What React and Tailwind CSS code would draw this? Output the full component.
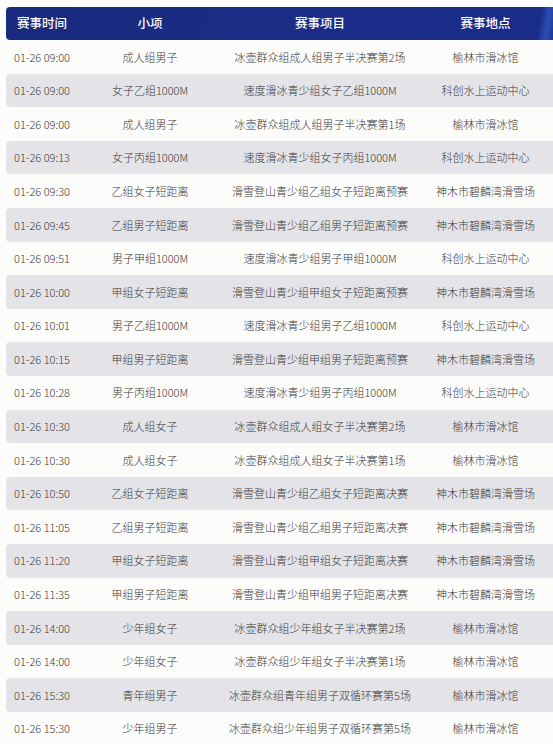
import React from "react";

const rows = [
  ["01-26 09:00", "成人组男子", "冰壶群众组成人组男子半决赛第2场", "榆林市滑冰馆"],
  ["01-26 09:00", "女子乙组1000M", "速度滑冰青少组女子乙组1000M", "科创水上运动中心"],
  ["01-26 09:00", "成人组男子", "冰壶群众组成人组男子半决赛第1场", "榆林市滑冰馆"],
  ["01-26 09:13", "女子丙组1000M", "速度滑冰青少组女子丙组1000M", "科创水上运动中心"],
  ["01-26 09:30", "乙组女子短距离", "滑雪登山青少组乙组女子短距离预赛", "神木市碧麟湾滑雪场"],
  ["01-26 09:45", "乙组男子短距离", "滑雪登山青少组乙组男子短距离预赛", "神木市碧麟湾滑雪场"],
  ["01-26 09:51", "男子甲组1000M", "速度滑冰青少组男子甲组1000M", "科创水上运动中心"],
  ["01-26 10:00", "甲组女子短距离", "滑雪登山青少组甲组女子短距离预赛", "神木市碧麟湾滑雪场"],
  ["01-26 10:01", "男子乙组1000M", "速度滑冰青少组男子乙组1000M", "科创水上运动中心"],
  ["01-26 10:15", "甲组男子短距离", "滑雪登山青少组甲组男子短距离预赛", "神木市碧麟湾滑雪场"],
  ["01-26 10:28", "男子丙组1000M", "速度滑冰青少组男子丙组1000M", "科创水上运动中心"],
  ["01-26 10:30", "成人组女子", "冰壶群众组成人组女子半决赛第2场", "榆林市滑冰馆"],
  ["01-26 10:30", "成人组女子", "冰壶群众组成人组女子半决赛第1场", "榆林市滑冰馆"],
  ["01-26 10:50", "乙组女子短距离", "滑雪登山青少组乙组女子短距离决赛", "神木市碧麟湾滑雪场"],
  ["01-26 11:05", "乙组男子短距离", "滑雪登山青少组乙组男子短距离决赛", "神木市碧麟湾滑雪场"],
  ["01-26 11:20", "甲组女子短距离", "滑雪登山青少组甲组女子短距离决赛", "神木市碧麟湾滑雪场"],
  ["01-26 11:35", "甲组男子短距离", "滑雪登山青少组甲组男子短距离决赛", "神木市碧麟湾滑雪场"],
  ["01-26 14:00", "少年组女子", "冰壶群众组少年组女子半决赛第2场", "榆林市滑冰馆"],
  ["01-26 14:00", "少年组女子", "冰壶群众组少年组女子半决赛第1场", "榆林市滑冰馆"],
  ["01-26 15:30", "青年组男子", "冰壶群众组青年组男子双循环赛第5场", "榆林市滑冰馆"],
  ["01-26 15:30", "少年组男子", "冰壶群众组少年组男子双循环赛第5场", "榆林市滑冰馆"],
];

const cols = "grid grid-cols-[72px_144px_196px_1fr] items-center";

export default function App() {
  return (
    <div
      className="w-[553px] h-[744px] overflow-hidden bg-[#fcfcfa] pt-[7px] pl-[6px]"
      style={{ fontFamily: '"Noto Sans CJK SC", "Noto Sans", sans-serif' }}
    >
      <div
        className={`${cols} h-[33px] rounded-l-[4px] text-white text-[12.5px] font-medium bg-[linear-gradient(100deg,#1a2a7e_0%,#1b2d88_60%,#1a2c8a_97%,#2c4db5_98.5%,#1e3592_100%)]`}
      >
        <div className="text-center">赛事时间</div>
        <div className="text-center">小项</div>
        <div className="text-center">赛事项目</div>
        <div className="text-center">赛事地点</div>
      </div>
      {rows.map((r, i) => (
        <div
          key={i}
          className={`${cols} h-[33.6px] rounded-l-[4px] text-[11px] font-light text-[#3a3a3a] ${
            i % 2 === 1 ? "bg-[#e4e4e8]" : "bg-[#fcfcfa]"
          }`}
        >
          <div className="text-center">{r[0]}</div>
          <div className="text-center">{r[1]}</div>
          <div className="text-center">{r[2]}</div>
          <div className="text-center">{r[3]}</div>
        </div>
      ))}
    </div>
  );
}
